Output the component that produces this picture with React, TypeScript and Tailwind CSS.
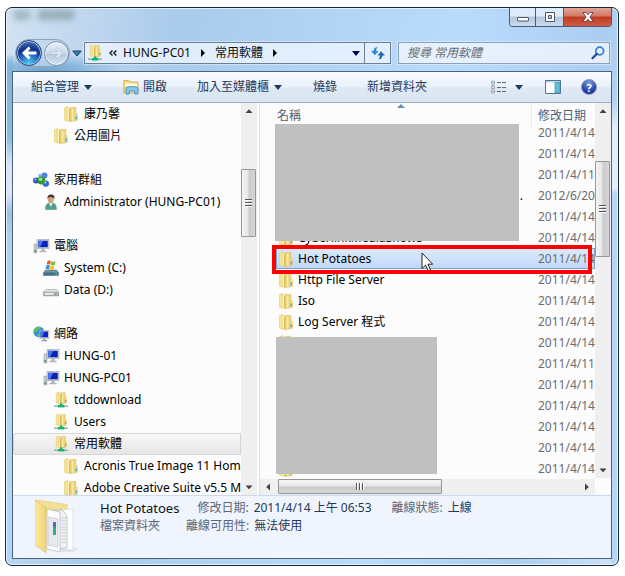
import React from "react";

type IconKind = "folder" | "netfolder" | "homegroup" | "user" | "computer" | "sysdrive" | "drive" | "network";

function FolderShape() {
  return (
    <>
      <path d="M1.500 1.500 4.500.6v14.600l-3-1z" fill="#f6e594" stroke="#e0c468" strokeWidth=".5" />
      <path d="M7.500 1.500h5.300v13.200l-5.300.8z" fill="#ecd27a" stroke="#d6b654" strokeWidth=".5" />
      <path d="M8.500 2.500h2v12l-2 .5z" fill="#f8e9a6" />
      <path d="M4.200 1 7.600 2.500v13.400L4.200 14.300z" fill="#fdf3bd" stroke="#dcc062" strokeWidth=".5" />
      <path d="M6 2.500 7.600 3v12.500L6 14.800z" fill="#dfbf55" />
      <path d="M12.300 7.500h2.200v6.700l-2.200.5z" fill="#f5e297" stroke="#d8ba58" strokeWidth=".4" />
      <path d="M12.600 10.200h1.300v3.200h-1.300z" fill="#4aa5e0" />
    </>
  );
}

function MonitorShape() {
  return (
    <>
      <path d="M1 6h3v9H1z" fill="#c9cdd0" stroke="#8b9196" strokeWidth=".5" />
      <path d="M1.4 12h1.6v2H1.4z" fill="#3aa83c" />
      <path d="M4 1.5h12v9H4z" fill="#d5d8da" stroke="#8e9498" strokeWidth=".5" />
      <path d="M5.2 2.8h9.6v6.5H5.2z" fill="#0b22b8" />
      <path d="M5.2 2.8h5L7 9.3H5.2z" fill="#4f75ec" />
      <path d="M8.5 10.5h3v2.3h2v1.4H6.5v-1.4h2z" fill="#b0b5b8" />
    </>
  );
}

function Icon({ kind }: { kind: IconKind }) {
  return (
    <svg viewBox="0 0 16 16" className="size-4 shrink-0 overflow-visible" aria-hidden="true">
      {kind === "folder" && <FolderShape />}
      {kind === "netfolder" && (
        <>
          <g transform="translate(2 -0.5) scale(.8)">
            <FolderShape />
          </g>
          <path d="M7 11.5h2.4v2H7z" fill="#12a765" />
          <path d="M1 13.6h14v1.2H1z" fill="#8f9a98" />
          <path d="M5 13h6.4v2.4H5z" fill="#13b56d" />
        </>
      )}
      {kind === "homegroup" && (
        <>
          <circle cx="11.5" cy="3.6" r="3" fill="#4f84d8" />
          <circle cx="3" cy="8.6" r="3" fill="#2c56bd" />
          <circle cx="12.8" cy="11.6" r="3.2" fill="#3469c8" />
          <circle cx="7.2" cy="3.8" r="2" fill="#7fb4ea" />
          <circle cx="8.4" cy="8.4" r="4" fill="#2f9a35" />
          <circle cx="7.6" cy="7.2" r="1.8" fill="#9fdc80" />
          <circle cx="2.4" cy="7.6" r="1" fill="#a9c9f2" />
          <circle cx="12.4" cy="10.6" r="1" fill="#b8d4f5" />
        </>
      )}
      {kind === "user" && (
        <>
          <path d="M2.5 15.5c-.2-4 1.2-6.2 4-6.8h3c2.600.6 4 2.800 4 6.800z" fill="#53a088" stroke="#3a7e6a" strokeWidth=".4" />
          <path d="M6 9h3.600L8 13z" fill="#e8f3ee" />
          <ellipse cx="7.800" cy="5" rx="3" ry="4" fill="#d1a27c" />
          <path d="M4.500 5C4 2 5.500.4 8 .4s4 1.600 3.300 4.600C10.500 3.500 9 3 7 3 5.500 3 5 4 4.500 5z" fill="#4a3526" />
        </>
      )}
      {kind === "computer" && <MonitorShape />}
      {kind === "sysdrive" && (
        <>
          <path d="M2.500 10h11l2 2.500v3h-15v-3z" fill="#6e97a8" stroke="#44606e" strokeWidth=".5" />
          <path d="M.8 12.500h14.400v2.600H.8z" fill="#3e7188" />
          <path d="M12.500 13.200h1.600v1.200h-1.600z" fill="#51e06a" />
          <path d="M4.500 1C6 .2 7 .4 8 1L7 4.800C6 4.200 5 4.200 3.600 4.800z" fill="#ea5b24" />
          <path d="M8.600 1.300c1.300.7 2.400.7 4 0l-1 3.800c-1.500.7-2.600.6-4 0z" fill="#7cbc35" />
          <path d="M3.400 5.500c1.300-.6 2.300-.5 3.500 0l-1 3.800c-1.300-.6-2.300-.5-3.500 0z" fill="#3b8ddc" />
          <path d="M7.400 5.800c1.400.6 2.500.7 4 0l-1 3.800c-1.400.7-2.600.600-4 0z" fill="#fbc51f" />
        </>
      )}
      {kind === "drive" && (
        <>
          <path d="M3 7.500h10.500l2 2.500v3.800H.6V10z" fill="#e4e5e6" stroke="#96999b" strokeWidth=".6" />
          <path d="M.8 10.200h14.500v3.400H.8z" fill="#c3c6c8" stroke="#85898b" strokeWidth=".6" />
          <path d="M2 11h8v1.600H2z" fill="#f0f1f1" />
          <path d="M12 11.200h1.600v1.600H12z" fill="#3fa743" />
        </>
      )}
      {kind === "network" && (
        <>
          <circle cx="5.800" cy="5.800" r="5.400" fill="#2f8fd8" />
          <path d="M2 2.500C4 .5 7 .4 8 1.500 7 3.500 5 3 4.500 5.500 3 7 1.500 6 .8 5zM4 8c2-.5 3 .5 2.500 3C4.500 10.500 4 9.500 4 8z" fill="#5bc250" />
          <path d="M6.500 4.500H16v8H6.500z" fill="#d3d8dc" stroke="#8d949a" strokeWidth=".4" />
          <path d="M7.500 5.500H15v5.800H7.500z" fill="#0b25bd" />
          <path d="M7.500 5.500h4L9 11.300H7.500z" fill="#4a72ea" />
          <path d="M10.500 12.500h1.600v1.600h2v1.200H8.500v-1.200h2z" fill="#8a98a6" />
        </>
      )}
    </svg>
  );
}

function Caret({ className = "" }: { className?: string }) {
  return (
    <svg viewBox="0 0 8 5" className={`h-[5px] w-2 shrink-0 ${className}`} aria-hidden="true">
      <path d="M0 0h8L4 5z" fill="currentColor" />
    </svg>
  );
}

function Chevron() {
  return (
    <svg viewBox="0 0 4 8" className="h-2 w-1 shrink-0 text-black" aria-hidden="true">
      <path d="M0 0l4 4-4 4z" fill="currentColor" />
    </svg>
  );
}

const ARROWS = {
  up: "M4.500 10h7L8 6.200z",
  down: "M4.500 6.500h7L8 10.300z",
  left: "M10 4.500v7L6.200 8z",
  right: "M6 4.500v7L9.800 8z",
};

function ScrollArrow({ dir }: { dir: keyof typeof ARROWS }) {
  return (
    <button type="button" aria-label={`Scroll ${dir}`} className="size-4 shrink-0 text-[#404040]">
      <svg viewBox="0 0 16 16" className="size-4">
        <path d={ARROWS[dir]} fill="currentColor" />
      </svg>
    </button>
  );
}

const TREE: ({ icon: IconKind; label: string; level: 0 | 1 | 2 | 3; selected?: boolean } | null)[] = [
  { icon: "folder", label: "康乃馨", level: 3 },
  { icon: "folder", label: "公用圖片", level: 2 },
  null,
  { icon: "homegroup", label: "家用群組", level: 0 },
  { icon: "user", label: "Administrator (HUNG-PC01)", level: 1 },
  null,
  { icon: "computer", label: "電腦", level: 0 },
  { icon: "sysdrive", label: "System (C:)", level: 1 },
  { icon: "drive", label: "Data (D:)", level: 1 },
  null,
  { icon: "network", label: "網路", level: 0 },
  { icon: "computer", label: "HUNG-01", level: 1 },
  { icon: "computer", label: "HUNG-PC01", level: 1 },
  { icon: "netfolder", label: "tddownload", level: 2 },
  { icon: "netfolder", label: "Users", level: 2 },
  { icon: "netfolder", label: "常用軟體", level: 2, selected: true },
  { icon: "folder", label: "Acronis True Image 11 Home", level: 3 },
  { icon: "folder", label: "Adobe Creative Suite v5.5 M", level: 3 },
];

const INDENT = ["pl-5", "pl-[30px]", "pl-10", "pl-[50px]"];

const FILES: { name?: string; date: string; selected?: boolean; cut?: boolean }[] = [
  { date: "2011/4/14" },
  { date: "2011/4/14" },
  { date: "2011/4/11" },
  { name: ".", date: "2012/6/20", cut: true },
  { date: "2011/4/14" },
  { name: "CyberlinkMediaShow5", date: "2011/4/14" },
  { name: "Hot Potatoes", date: "2011/4/14", selected: true },
  { name: "Http File Server", date: "2011/4/14" },
  { name: "Iso", date: "2011/4/14" },
  { name: "Log Server 程式", date: "2011/4/14" },
  { date: "2011/4/14" },
  { date: "2011/4/11" },
  { date: "2011/4/11" },
  { date: "2011/4/14" },
  { date: "2011/4/14" },
  { date: "2011/4/14" },
  { date: "2011/4/14" },
];

function TitleBar() {
  return (
    <div className="flex h-[29px] items-start justify-end">
      <div className="flex h-[19px] overflow-hidden rounded-b-[4px] border border-t-0 border-[#4c5b6b]">
        <button type="button" aria-label="Minimize" className="grid w-[26px] place-items-center border-r border-[#4c5b6b] bg-[linear-gradient(#dfebf8_45%,#b4c7dc_50%,#c9dcf0)]">
          <svg viewBox="0 0 12 10" className="h-2.5 w-3">
            <rect x=".5" y="5.500" width="11" height="3.500" rx=".5" fill="#fff" stroke="#4d5565" />
          </svg>
        </button>
        <button type="button" aria-label="Maximize" className="grid w-7 place-items-center border-r border-[#4c5b6b] bg-[linear-gradient(#dfebf8_45%,#b4c7dc_50%,#c9dcf0)]">
          <svg viewBox="0 0 12 10" className="h-2.5 w-3">
            <path d="M1.500.5h9v9h-9zM4.500 3.500v3h3v-3z" fill="#fff" stroke="#4d5565" fillRule="evenodd" />
          </svg>
        </button>
        <button type="button" aria-label="Close" className="grid w-[47px] place-items-center bg-[linear-gradient(#e5a598,#d27863_45%,#be3a22_50%,#cf5c42)]">
          <svg viewBox="0 0 12 10" className="h-2.5 w-3">
            <path d="M.8.5h3.400L6 2.800 7.800.5h3.400L7.900 5l3.300 4.500H7.800L6 7.200 4.200 9.500H.8L4.100 5z" fill="#fff" stroke="#5a4450" strokeWidth=".9" />
          </svg>
        </button>
      </div>
    </div>
  );
}

function NavButtons() {
  return (
    <div className="flex h-7 items-center rounded-full border border-[#8ba4be] bg-[#c3d6ea]/70">
      <button type="button" aria-label="Back" className="grid size-[26px] place-items-center rounded-full border border-[#2a4a80] bg-[radial-gradient(circle_at_50%_95%,#4fd0f5,#1c56b0_45%,#0e3285_60%,#6d93cf)] shadow-[inset_0_0_0_1px_#a9c6ea]">
        <svg viewBox="0 0 16 14" className="h-3.5 w-4">
          <path d="M7.500.5 9.600 2.600 7 5.400h8.500v3.200H7l2.600 2.800-2.100 2.100L1 7z" fill="#fff" />
        </svg>
      </button>
      <button type="button" aria-label="Forward" className="ml-0.5 grid size-[25px] place-items-center rounded-full border border-[#7d93ad] bg-[linear-gradient(#e8f0f8,#c9d8e7_50%,#b4c8dc_52%,#d3e3f2)] shadow-[inset_0_0_0_1px_#eef5fb]">
        <svg viewBox="0 0 16 14" className="h-3 w-3.5">
          <path d="M8.500.5 6.400 2.600 9 5.400H.5v3.200H9l-2.600 2.800 2.100 2.100L15 7z" fill="#dce7f2" stroke="#a9bccf" strokeWidth=".7" />
        </svg>
      </button>
    </div>
  );
}

function AddressRow() {
  return (
    <div className="flex h-[34px] items-center pr-0.5 pb-0.5 pl-[3px]">
      <NavButtons />
      <button type="button" aria-label="Recent pages" className="mx-0.5 grid w-2.5 shrink-0 place-items-center">
        <svg viewBox="0 0 10 7" className="h-[7px] w-2.5">
          <path d="M.8 1h8.400L5 6z" fill="#2585b8" stroke="#1c3c64" strokeWidth="1" />
        </svg>
      </button>
      <nav aria-label="Address" className="flex h-[22px] min-w-0 flex-1 items-center border border-[#6c7f94] bg-[#eaf3fd]/85 pl-0.5 text-[#111] shadow-[0_0_0_1px_#ffffff66]">
        <Icon kind="netfolder" />
        <svg viewBox="0 0 8 6" className="mx-1.5 h-1.5 w-2 shrink-0" aria-label="«">
          <path d="M3.500.5 1 3l2.500 2.500M7.300.5 4.800 3l2.500 2.500" fill="none" stroke="#111" strokeWidth="1.300" />
        </svg>
        <button type="button">HUNG-PC01</button>
        <span className="mx-2.5"><Chevron /></span>
        <button type="button">常用軟體</button>
        <span className="ml-2.5"><Chevron /></span>
        <button type="button" aria-label="Previous locations" className="ml-auto px-1 text-[#00006c]"><Caret /></button>
        <button type="button" aria-label="Refresh" className="grid h-full w-[26px] shrink-0 place-items-center border-l border-[#6c7f94]">
          <svg viewBox="0 0 16 14" className="h-3.5 w-4">
            <path d="M7.500 1C4.800 1.200 3.600 2.800 3.600 5H1l3.900 4.300L8.600 5H6.200C6.200 3.500 6.500 2.200 7.500 1z" fill="#2d8bd0" />
            <path d="M8.500 13.500c2.700-.2 3.900-1.800 3.900-4H15l-3.900-4.300L7.400 9.500h2.400c0 1.500-.3 2.800-1.300 4z" fill="#2568b4" />
          </svg>
        </button>
      </nav>
      <label className="ml-[7px] flex h-[22px] w-[212px] items-center border border-[#8ba0b8] bg-[#eef5fd]/85 pr-1 pl-2 shadow-[0_0_0_1px_#ffffff66]">
        <input type="search" aria-label="搜尋" placeholder="搜尋 常用軟體" className="min-w-0 flex-1 bg-transparent italic outline-none placeholder:text-[#6b7075]" />
        <svg viewBox="0 0 14 14" className="size-3.5" aria-hidden="true">
          <circle cx="8.700" cy="5" r="3.900" fill="#e3f2fd" stroke="#2f7fd0" strokeWidth="1.700" />
          <path d="M5.800 7.900 1.500 12.300" stroke="#24509b" strokeWidth="2.300" strokeLinecap="round" />
        </svg>
      </label>
    </div>
  );
}

function Toolbar() {
  return (
    <div role="toolbar" className="flex h-[31px] shrink-0 items-center border-b border-[#a0b2c8] bg-[linear-gradient(#fafcff,#e9f1fb_50%,#dfe9f5_52%,#dae5f3)] pr-3.5 pl-[18px] whitespace-nowrap text-[#1e395b]">
      <button type="button" className="flex items-center gap-[5px]">組合管理<Caret /></button>
      <button type="button" className="ml-[31px] flex items-center gap-1">
        <svg viewBox="0 0 16 16" className="size-4" aria-hidden="true">
          <path d="M.8 1.500h5L7 3h8v11H.8z" fill="#f6dc84" stroke="#cfa640" strokeWidth=".8" />
          <path d="M2 4.500h12V7H2z" fill="#fffbe4" />
          <path d="M3 9c3-2 8-2 12 0v6h-3.200v-3H6.200v3H3z" fill="#82c8f0" stroke="#3a86c2" strokeWidth=".8" />
        </svg>
        開啟
      </button>
      <button type="button" className="ml-[30px] flex items-center gap-[5px]">加入至媒體櫃<Caret /></button>
      <button type="button" className="ml-[31px]">燒錄</button>
      <button type="button" className="ml-[30px]">新增資料夾</button>
      <div className="ml-auto flex items-center">
        <button type="button" aria-label="Views">
          <svg viewBox="0 0 16 14" className="h-3.5 w-4">
            <path d="M.5 1h3v3h-3zM.5 5.500h3v3h-3zM.5 10h3v3h-3z" fill="#fff" stroke="#8b99a8" strokeWidth=".8" />
            <path d="M1.500 2h1v1h-1zM1.500 11h1v1h-1z" fill="#3b73c9" />
            <path d="M1.500 6.500h1v1h-1z" fill="#d03324" />
            <path d="M6 2.500h4M11 2.500h4M6 7.500h4M11 7.500h4M6 11.500h4M11 11.500h4" stroke="#5b6c80" />
          </svg>
        </button>
        <button type="button" aria-label="More views" className="ml-2"><Caret /></button>
        <button type="button" aria-label="Preview pane" className="ml-[22px]">
          <svg viewBox="0 0 16 14" className="h-3.5 w-4">
            <path d="M.5.5h15v13H.5z" fill="#fff" stroke="#4d7396" />
            <path d="M1 1h14v1.600H1z" fill="#b8d3e8" />
            <path d="M10 2.500h5V13h-5z" fill="#62c0dc" stroke="#3f85a5" strokeWidth=".7" />
          </svg>
        </button>
        <button type="button" aria-label="Help" className="ml-5 grid size-4 place-items-center rounded-full border border-[#8b93a5] bg-[radial-gradient(circle_at_50%_20%,#7f9fe0,#1f3fa8_65%)] text-[11px] leading-none font-bold text-white">?</button>
      </div>
    </div>
  );
}

function VerticalScroll({ before, thumb }: { before: string; thumb: string }) {
  return (
    <div className="flex w-4 shrink-0 flex-col bg-[#efefef]">
      <ScrollArrow dir="up" />
      <div className={before} />
      <div className={`grid w-[15px] shrink-0 place-items-center rounded-[1px] border border-[#969696] bg-[linear-gradient(to_right,#f5f5f5,#e6e6e8_45%,#cbcbcf_55%,#d6d6d8)] ${thumb}`}>
        <span className="h-2 w-[7px] bg-[repeating-linear-gradient(#555_0_1px,#fff_1px_2px,transparent_2px_3px)]" />
      </div>
      <div className="flex-1" />
      <ScrollArrow dir="down" />
    </div>
  );
}

function Tree() {
  return (
    <aside className="flex w-[247px] shrink-0 border-r border-[#d5e3f3] pr-0.5">
      <ul className="min-w-0 flex-1 overflow-hidden">
        {TREE.map((item, i) =>
          item ? (
            <li
              key={i}
              className={`flex h-[22px] items-center gap-[5px] whitespace-nowrap ${INDENT[item.level]} ${
                item.selected ? "rounded-l-[3px] bg-[linear-gradient(#f8f8f8,#e5e5e5)] shadow-[inset_0_0_0_1px_#d6d6d6]" : ""
              }`}
            >
              <Icon kind={item.icon} />
              <span>{item.label}</span>
            </li>
          ) : (
            <li key={i} className="h-[22px]" aria-hidden="true" />
          ),
        )}
      </ul>
      <VerticalScroll before="h-[50px]" thumb="h-[68px]" />
    </aside>
  );
}

function FileList() {
  return (
    <section className="relative flex min-w-0 flex-1">
      <div className="flex min-w-0 flex-1 flex-col">
        <table className="flex min-h-0 flex-1 flex-col">
          <thead className="block shrink-0 text-[#4c607a]">
            <tr className="flex h-[25px]">
              <th className="relative flex min-w-0 flex-1 items-center pl-[17px] font-normal">
                名稱
                <svg viewBox="0 0 8 4" className="absolute top-px left-[137px] h-1 w-2" aria-hidden="true">
                  <path d="M0 4h8L4 0z" fill="#5c93b4" />
                </svg>
              </th>
              <th className="flex w-16 items-center overflow-hidden border-l border-[#e2eaf4] pl-1.5 font-normal whitespace-nowrap">修改日期</th>
            </tr>
          </thead>
          <tbody className="flex min-h-0 flex-1 flex-col justify-end overflow-hidden">
            {FILES.map((f, i) => (
              <tr
                key={i}
                className={`ml-4 flex h-[21px] shrink-0 ${f.selected ? "bg-[linear-gradient(#dcebfd,#bed8fa)] shadow-[inset_0_0_0_1px_#7da2ce]" : ""}`}
              >
                <td className={`flex min-w-0 flex-1 items-center gap-1 pl-0.5 ${f.cut ? "justify-between pr-2" : ""}`}>
                  <Icon kind="folder" />
                  {f.name}
                </td>
                <td className="flex w-16 items-center overflow-hidden pl-[7px] whitespace-nowrap text-[#6d6d6d]">{f.date}</td>
              </tr>
            ))}
          </tbody>
        </table>
        <div className="flex h-4 shrink-0 bg-[#efefef]">
          <ScrollArrow dir="left" />
          <div className="ml-0.5 grid h-[15px] w-[164px] place-items-center rounded-[1px] border border-[#969696] bg-[linear-gradient(#f5f5f5,#e6e6e8_45%,#cbcbcf_55%,#d6d6d8)]">
            <span className="h-[7px] w-2 bg-[repeating-linear-gradient(to_right,#555_0_1px,#fff_1px_2px,transparent_2px_3px)]" />
          </div>
          <div className="flex-1" />
          <ScrollArrow dir="right" />
        </div>
      </div>
      <div className="flex shrink-0 pb-[17px]">
        <VerticalScroll before="h-[42px]" thumb="h-24" />
      </div>

      <div className="absolute top-[21px] left-[15px] h-[117px] w-[244px] bg-[#c0c0c0]" />
      <div className="absolute top-[234px] left-4 h-[137px] w-[161px] bg-[#c0c0c0]" />
      <svg viewBox="0 0 13 20" className="absolute top-[149px] left-[161px] h-5 w-[13px]" aria-hidden="true">
        <path d="M1 1v15.500l3.600-3.300 2.600 5.600 2.300-1-2.600-5.600h4.800z" fill="#fff" stroke="#222" strokeWidth="1" />
      </svg>
      <div className="absolute top-[142px] right-[19px] left-3 h-[29px] border-4 border-[#ff0000]" />
    </section>
  );
}

function Details() {
  return (
    <footer className="flex h-[63px] shrink-0 border-t border-[#cddaea] bg-[#f0f4fc] whitespace-nowrap">
      <svg viewBox="0 0 46 56" className="mt-[3px] ml-[22px] h-14 w-[46px] shrink-0" aria-hidden="true">
        <defs>
          <linearGradient id="flap" x1="0" x2="1">
            <stop offset="0" stopColor="#fbeaa0" />
            <stop offset="1" stopColor="#f0d375" />
          </linearGradient>
        </defs>
        <path d="M24 48 44 49 38 53 22 53z" fill="#dde2ea" />
        <path d="M1 1 32 5.500v10H10z" fill="#f3df93" stroke="#e2c972" strokeWidth=".6" />
        <path d="M26 11 38 10v41l-12-1z" fill="#fff" stroke="#d5d9de" strokeWidth=".7" />
        <path d="M17 11h10c4 3 5 6 5 10v28l-15 1z" fill="#f1f2f6" stroke="#abb1b9" strokeWidth=".7" />
        <path d="M26 19h5M26 22h5M26 25h5M26 28h5M26 31h5M26 34h5M26 37h5M26 40h5M26 43h5" stroke="#bfc6d2" strokeWidth=".8" />
        <path d="M12 10 25 13v40L12 50z" fill="#fdfdfd" stroke="#b2b5b9" strokeWidth=".7" />
        <path d="M13 18 23 20v28L13 46z" fill="#e7e9ec" stroke="#bcc0c5" strokeWidth=".6" />
        <path d="M18 23h3v13h-3z" fill="#3aa890" />
        <path d="M18 23h3v5h-3z" fill="#4872c0" />
        <path d="M0 1 11 9v45L0 46z" fill="url(#flap)" stroke="#dfc261" strokeWidth=".6" />
      </svg>
      <div className="ml-[19px] flex flex-col gap-0.5 pt-1 leading-4">
        <div className="flex">
          <strong className="text-[13px] font-normal text-[#111]">Hot Potatoes</strong>
          <dl className="flex">
            <dt className="ml-[18px] text-[#5a6779]">修改日期:</dt>
            <dd className="ml-[5px] text-[#1e395b]">2011/4/14 上午 06:53</dd>
            <dt className="ml-5 text-[#5a6779]">離線狀態:</dt>
            <dd className="ml-[5px] text-[#1e395b]">上線</dd>
          </dl>
        </div>
        <div className="flex">
          <span className="text-[#5a6779]">檔案資料夾</span>
          <dl className="flex">
            <dt className="ml-[26px] text-[#5a6779]">離線可用性:</dt>
            <dd className="ml-[5px] text-[#1e395b]">無法使用</dd>
          </dl>
        </div>
      </div>
    </footer>
  );
}

export default function App() {
  return (
    <div className="bg-white pt-[7px] pr-1.5 pb-2.5 pl-[5px] font-['Noto_Sans','Noto_Sans_CJK_TC',sans-serif] text-[12px] leading-4 text-black">
      <main className="relative overflow-hidden rounded-[7px] border border-[#1b2a3a] px-1.5 pb-1.5 shadow-[inset_0_0_0_1px_#e3f0fc] [background:linear-gradient(transparent_45px,#7db5d8_60px,#86bcdf_130px,#d3e5f6_155px,#dbe8f7_185px,#9fbfe4_205px,#b0d0f2_230px,#b3d6f8)_0_0/7px_100%_no-repeat,linear-gradient(transparent_90px,#e3eefa_120px,#e3eefa_180px,#b5d6f8_186px)_100%_0/7px_100%_no-repeat,radial-gradient(ellipse_80px_16px_at_40px_62px,#6fa3cc,#8fbbe0_50%,transparent),linear-gradient(100deg,#d3e2f3,#bfd6ee_12%,#a9cbec_25%,#b3d3f4_45%,#b9dbfc_65%,#aacdf2_85%,#cfe2f7)]">
        <div className="absolute top-0.5 left-2 flex gap-2 blur-[3px]" aria-hidden="true">
          <span className="h-2.5 w-4 bg-[#7c9c9e]/60" />
          <span className="h-2.5 w-9 bg-[#7f9da0]/70" />
        </div>
        <div className="relative">
          <TitleBar />
          <AddressRow />
          <div className="border border-[#4d6379] bg-[#fcfcfc]">
            <Toolbar />
            <div className="flex h-[392px]">
              <Tree />
              <FileList />
            </div>
            <Details />
          </div>
        </div>
      </main>
    </div>
  );
}
